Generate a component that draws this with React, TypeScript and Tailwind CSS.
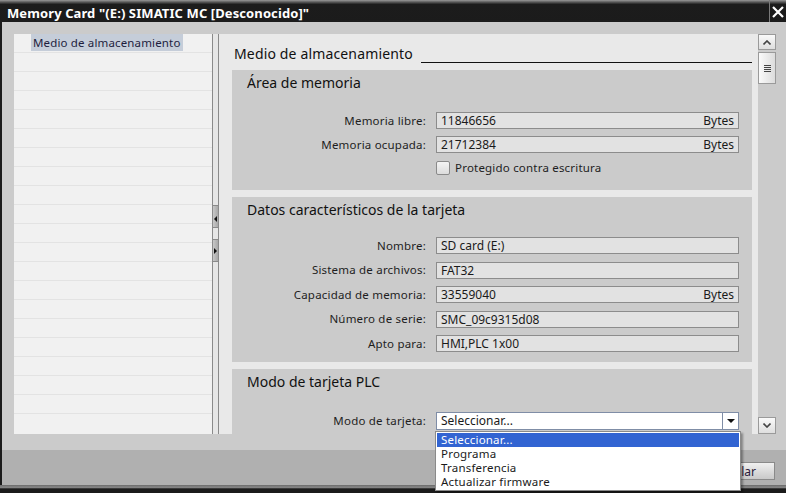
import React from "react";

const Field = ({ label, value, unit }: { label: string; value: string; unit?: string }) => (
  <div className="flex items-center h-[17px]">
    <div className="w-[195px] text-right pr-[1px] text-[11.5px] leading-[16px] text-[#1e1e1e] tracking-[0.2px] whitespace-nowrap">{label}</div>
    <div className="ml-[9px] w-[303px] h-[17px] bg-[#e2e2e2] border border-[#8c8c8c] flex items-center justify-between px-[4px] text-[12px] leading-[15px] text-[#1a1a1a]">
      <span>{value}</span>
      {unit ? <span>{unit}</span> : null}
    </div>
  </div>
);

const Section = ({ title, children, className }: { title: string; children?: React.ReactNode; className?: string }) => (
  <div className={"bg-[#cbcbcb] ml-[13px] mr-[6px] " + (className ?? "")}>
    <div className="pt-[5px] h-[21px] pl-[15px] text-[14px] leading-[16px] text-[#111] whitespace-nowrap">{title}</div>
    {children}
  </div>
);

export default function App() {
  const rows = Array.from({ length: 20 });
  return (
    <div className="w-[786px] h-[493px] flex flex-col bg-[#cbcbcb] overflow-hidden relative font-['Noto_Sans',sans-serif]">
      {/* Title bar */}
      <div className="h-[22px] shrink-0 flex bg-gradient-to-b from-[#9a9a9a] via-[#1c1c1c] via-[20%] to-[#1b1b1b]">
        <div className="flex-1 pl-[7px] flex items-center pt-[3px] text-white font-bold text-[13px] leading-[16px] tracking-[0.1px] whitespace-nowrap">
          Memory Card "(E:) SIMATIC MC [Desconocido]"
        </div>
        <div className="w-[17px] border-l border-[#7a7a7a] flex items-center justify-center pt-[2px]">
          <svg width="12" height="12" viewBox="0 0 12 12">
            <path d="M1 1 L11 11 M11 1 L1 11" stroke="white" strokeWidth="2.2" />
          </svg>
        </div>
      </div>

      {/* Body */}
      <div className="h-[428px] shrink-0 flex border-l-2 border-[#1b1b1b] pl-[12px] pt-[12px] pr-[10px] pb-[16px]">
        {/* Left panel */}
        <div className="w-[198px] min-h-0 bg-[#f1f1f1] flex flex-col overflow-hidden">
          {rows.map((_, i) => (
            <div key={i} className="h-[19px] shrink-0 border-b border-[#e3e3e3] flex items-center">
              {i === 0 ? (
                <span className="ml-[17px] bg-[#c5cdd9] px-[2px] h-[17px] flex items-center text-[11.5px] leading-[16px] whitespace-nowrap text-[#1e1e3e] mt-[-1px] tracking-[0.15px]">
                  Medio de almacenamiento
                </span>
              ) : null}
            </div>
          ))}
        </div>

        {/* Splitter */}
        <div className="w-[7px] flex flex-col border-l border-r border-[#8a8a8a] bg-[#e6e6e6]">
          <div className="h-[171px] shrink-0" />
          <div className="h-[23px] shrink-0 bg-gradient-to-r from-[#c8c8c8] to-[#a8a8a8] border-y border-[#8a8a8a] flex items-end justify-center pb-[5px]">
            <div className="w-0 h-0 border-y-[3px] border-y-transparent border-r-[3px] border-r-[#111]" />
          </div>
          <div className="h-[11px] shrink-0" />
          <div className="h-[23px] shrink-0 bg-gradient-to-r from-[#c8c8c8] to-[#a8a8a8] border-y border-[#8a8a8a] flex items-center justify-center">
            <div className="w-0 h-0 border-y-[3px] border-y-transparent border-l-[3px] border-l-[#111]" />
          </div>
        </div>

        {/* Content */}
        <div className="flex-1 min-h-0 bg-[#e9e9e9] overflow-hidden flex flex-col">
          <div className="h-[36px] shrink-0 flex items-center pl-[15px] pt-[4px] mr-[6px]">
            <span className="text-[14px] leading-[16px] text-[#111] tracking-[0.15px] whitespace-nowrap">Medio de almacenamiento</span>
            <div className="flex-1 ml-[8px] h-px bg-[#111] mt-[16px]" />
          </div>

          <Section title="Área de memoria" className="h-[120px] shrink-0">
            <div className="flex flex-col gap-[7px] mt-[21px]">
              <Field label="Memoria libre:" value="11846656" unit="Bytes" />
              <Field label="Memoria ocupada:" value="21712384" unit="Bytes" />
              <div className="flex items-center h-[15px] ml-[204px]">
                <div className="w-[14px] h-[14px] border border-[#8a8a8a] rounded-[2px] bg-gradient-to-b from-[#f4f4f4] to-[#dcdcdc]" />
                <span className="ml-[5px] text-[11.5px] leading-[16px] text-[#1e1e1e] tracking-[0.2px]">Protegido contra escritura</span>
              </div>
            </div>
          </Section>

          <Section title="Datos característicos de la tarjeta" className="h-[165px] shrink-0 mt-[7px]">
            <div className="flex flex-col gap-[7.5px] mt-[19px]">
              <Field label="Nombre:" value="SD card (E:)" />
              <Field label="Sistema de archivos:" value="FAT32" />
              <Field label="Capacidad de memoria:" value="33559040" unit="Bytes" />
              <Field label="Número de serie:" value="SMC_09c9315d08" />
              <Field label="Apto para:" value="HMI,PLC 1x00" />
            </div>
          </Section>

          <Section title="Modo de tarjeta PLC" className="h-[80px] shrink-0 mt-[7px]">
            <div className="flex items-center h-[17px] mt-[22px]">
              <div className="w-[195px] text-right pr-[1px] text-[11.5px] leading-[16px] text-[#1e1e1e] tracking-[0.2px]">Modo de tarjeta:</div>
              <div className="ml-[9px] w-[303px] h-[18px] bg-white border border-[#7f8da6] flex items-center text-[12px] leading-[15px] text-[#1a1a1a]">
                <span className="flex-1 pl-[4px]">Seleccionar...</span>
                <div className="w-[16px] h-full border-l border-[#7f8da6] flex items-center justify-center">
                  <div className="w-0 h-0 border-x-[4px] border-x-transparent border-t-[4px] border-t-[#111]" />
                </div>
              </div>
            </div>
          </Section>
        </div>

        {/* Scrollbar */}
        <div className="w-[18px] bg-[#cbcbcb] flex flex-col">
          <div className="h-[16px] shrink-0 border border-[#9a9a9a] bg-gradient-to-b from-[#fafafa] to-[#dedede] flex items-center justify-center">
            <svg width="8" height="5" viewBox="0 0 8 5"><path d="M0.5 4.5 L4 1 L7.5 4.5" stroke="#444" strokeWidth="1.6" fill="none" /></svg>
          </div>
          <div className="h-[32px] shrink-0 mt-[2px] border border-[#9a9a9a] bg-gradient-to-r from-[#fafafa] to-[#dcdcdc] flex flex-col items-center justify-center gap-[1px]">
            <div className="w-[7px] h-px bg-[#444]" />
            <div className="w-[7px] h-px bg-[#444]" />
            <div className="w-[7px] h-px bg-[#444]" />
            <div className="w-[7px] h-px bg-[#444]" />
          </div>
          <div className="flex-1" />
          <div className="h-[17px] shrink-0 border border-[#9a9a9a] bg-gradient-to-b from-[#fafafa] to-[#dedede] flex items-center justify-center">
            <svg width="8" height="5" viewBox="0 0 8 5"><path d="M0.5 0.5 L4 4 L7.5 0.5" stroke="#444" strokeWidth="1.6" fill="none" /></svg>
          </div>
        </div>
      </div>

      {/* Button bar */}
      <div className="h-[35px] shrink-0 bg-[#b0b0b0] border-l-2 border-[#1b1b1b] flex items-start justify-end pt-[12px] pr-[11px] gap-[7px]">
        <div className="w-[87px] h-[18px] border border-[#8a8a8a] bg-gradient-to-b from-[#f0f0f0] to-[#c9c9c9] flex items-center justify-center text-[12px] leading-[15px] text-[#2a1a3a]">Aceptar</div>
        <div className="w-[87px] h-[18px] border border-[#8a8a8a] bg-gradient-to-b from-[#f0f0f0] to-[#c9c9c9] flex items-center justify-center text-[12px] leading-[15px] text-[#2a1a3a]">Cancelar</div>
      </div>
      <div className="flex-1 bg-gradient-to-b from-[#6a6a6a] via-[#8a8a8a] via-[30%] to-[#1b1b1b] to-[50%]" />

      {/* Dropdown list */}
      <div className="absolute left-[435px] top-[431px] w-[306px] bg-white border border-[#8a8a8a] shadow-[2px_2px_2px_rgba(0,0,0,0.35)] flex flex-col py-px text-[11.5px] leading-[14px] text-[#1a1a1a] tracking-[0.2px]">
        <div className="h-[14px] bg-[#3264d2] text-white pl-[4px] flex items-center mx-px">Seleccionar...</div>
        <div className="h-[14px] pl-[5px] flex items-center">Programa</div>
        <div className="h-[14px] pl-[5px] flex items-center">Transferencia</div>
        <div className="h-[14px] pl-[5px] flex items-center">Actualizar firmware</div>
      </div>
    </div>
  );
}
